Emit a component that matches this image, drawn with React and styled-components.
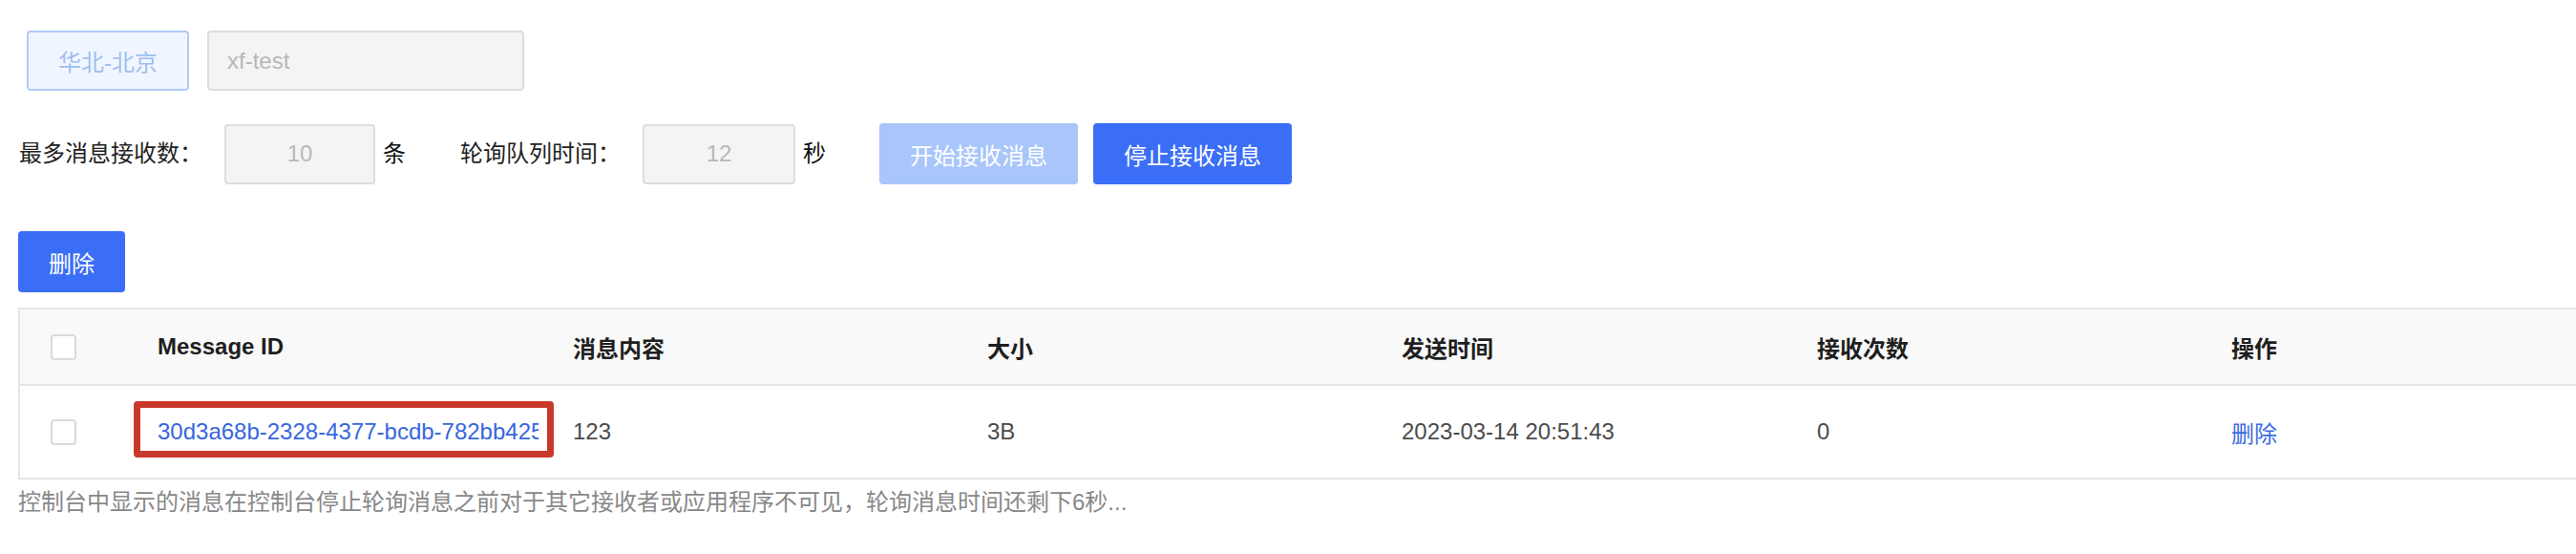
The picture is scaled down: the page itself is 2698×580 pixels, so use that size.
import React from "react";
import styled, { createGlobalStyle } from "styled-components";

const Global = createGlobalStyle`
  html, body { margin: 0; padding: 0; background: #fff; overflow: hidden; }
  body { font-family: "Liberation Sans", "Noto Sans CJK SC", sans-serif; font-size: 24px; color: #222; }
`;

const Page = styled.div`
  padding: 32px 0 0 19px;
  width: 2760px;
`;

const TopRow = styled.div`
  display: flex;
  gap: 19px;
  margin-left: 9px;
  height: 63px;
`;

const RegionButton = styled.div`
  box-sizing: border-box;
  width: 170px;
  height: 63px;
  display: flex;
  align-items: center;
  justify-content: center;
  border: 2px solid #aecbf7;
  background: #f0f6ff;
  color: #9fbef2;
  border-radius: 4px;
`;

const DisabledInput = styled.div`
  box-sizing: border-box;
  width: ${(p) => p.$w}px;
  height: 63px;
  display: flex;
  align-items: center;
  justify-content: ${(p) => (p.$center ? "center" : "flex-start")};
  padding-left: ${(p) => (p.$center ? 0 : 19)}px;
  border: 2px solid #dddddd;
  background: #f4f4f4;
  color: #b8b8b8;
  border-radius: 4px;
`;

const ControlRow = styled.div`
  display: flex;
  align-items: center;
  margin-top: 34px;
  height: 64px;
`;

const Label = styled.span`
  color: #222;
  white-space: nowrap;
  margin-left: ${(p) => p.$ml || 0}px;
  margin-right: 23px;
  line-height: 1;
`;

const Unit = styled.span`
  color: #111;
  margin-left: 8px;
  line-height: 1;
`;

const Button = styled.button`
  box-sizing: border-box;
  height: 64px;
  padding: 0 32px;
  border: none;
  border-radius: 4px;
  font-family: inherit;
  font-size: 24px;
  color: #fff;
  background: ${(p) => (p.$disabled ? "#a9c6fa" : "#3b6ef6")};
  margin-left: ${(p) => p.$ml || 0}px;
  cursor: pointer;
`;

const ActionRow = styled.div`
  margin-top: 49px;
  display: flex;
`;

const Table = styled.table`
  margin-top: 16px;
  width: 2718px;
  table-layout: fixed;
  border-collapse: collapse;
  border-top: 2px solid #e5e5e5;
  border-left: 2px solid #e5e5e5;
`;

const Th = styled.th`
  height: 78px;
  padding: 0 0 0 ${(p) => (p.$check ? 32 : 34)}px;
  text-align: left;
  font-weight: bold;
  color: #1e1e1e;
  background: #f9f9f9;
  border-bottom: 2px solid #e5e5e5;
  white-space: nowrap;
`;

const Td = styled.td`
  position: relative;
  height: 96px;
  padding: 0 0 0 ${(p) => (p.$check ? 32 : 34)}px;
  color: #4b4b4b;
  border-bottom: 2px solid #e5e5e5;
  white-space: nowrap;
`;

const Checkbox = styled.span`
  display: block;
  box-sizing: border-box;
  width: 27px;
  height: 27px;
  border: 2px solid #dadada;
  border-radius: 4px;
  background: #fff;
`;

const IdText = styled.span`
  display: block;
  width: 399px;
  overflow: hidden;
  color: #3766de;
`;

const Highlight = styled.span`
  position: absolute;
  left: 9px;
  top: 16px;
  width: 440px;
  height: 59px;
  box-sizing: border-box;
  border: 7px solid #c9392b;
  border-radius: 4px;
  pointer-events: none;
`;

const LinkText = styled.span`
  color: #3a6ce0;
`;

const Footer = styled.div`
  margin-top: 9px;
  color: #888;
  line-height: 30px;
`;

const columns = ["Message ID", "消息内容", "大小", "发送时间", "接收次数", "操作"];
const widths = [111, 435, 434, 434, 435, 434, 435];

export default function App() {
  return (
    <>
      <Global />
      <Page>
        <TopRow>
          <RegionButton>华北-北京</RegionButton>
          <DisabledInput $w={332}>xf-test</DisabledInput>
        </TopRow>
        <ControlRow>
          <Label $ml={1}>最多消息接收数：</Label>
          <DisabledInput $w={158} $center>10</DisabledInput>
          <Unit>条</Unit>
          <Label $ml={57}>轮询队列时间：</Label>
          <DisabledInput $w={160} $center>12</DisabledInput>
          <Unit>秒</Unit>
          <Button $disabled $ml={56}>开始接收消息</Button>
          <Button $ml={16}>停止接收消息</Button>
        </ControlRow>
        <ActionRow>
          <Button>删除</Button>
        </ActionRow>
        <Table>
          <colgroup>
            {widths.map((w, i) => (
              <col key={i} style={{ width: w }} />
            ))}
          </colgroup>
          <thead>
            <tr>
              <Th $check>
                <Checkbox />
              </Th>
              {columns.map((c) => (
                <Th key={c}>{c}</Th>
              ))}
              <Th />
            </tr>
          </thead>
          <tbody>
            <tr>
              <Td $check>
                <Checkbox />
              </Td>
              <Td>
                <IdText>30d3a68b-2328-4377-bcdb-782bb4251c9e</IdText>
                <Highlight />
              </Td>
              <Td>123</Td>
              <Td>3B</Td>
              <Td>2023-03-14 20:51:43</Td>
              <Td>0</Td>
              <Td>
                <LinkText>删除</LinkText>
              </Td>
              <Td />
            </tr>
          </tbody>
        </Table>
        <Footer>控制台中显示的消息在控制台停止轮询消息之前对于其它接收者或应用程序不可见，轮询消息时间还剩下6秒...</Footer>
      </Page>
    </>
  );
}
